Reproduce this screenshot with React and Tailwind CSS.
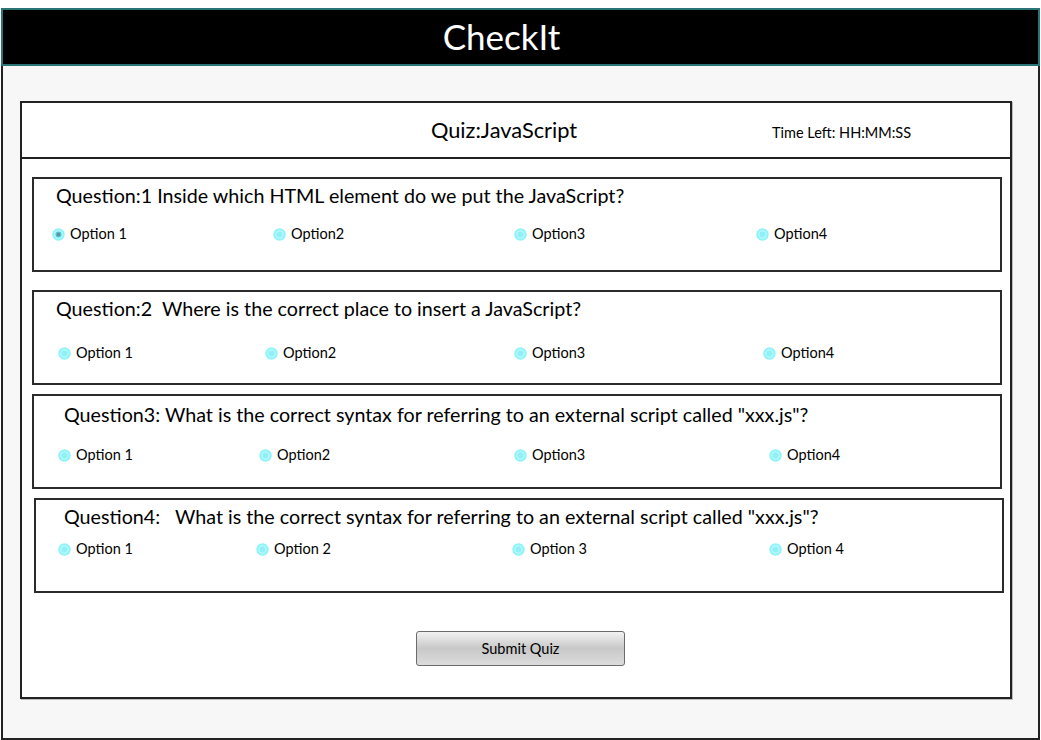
import React, { useState } from "react";

const questions = [
  {
    id: 1,
    text: "Question:1 Inside which HTML element do we put the JavaScript?",
    box: "mt-[18px] ml-[10px] w-[970px] h-[95px]",
    textPad: "pl-[22px] pt-[5px]",
    optRow: "mt-[17px] pl-[18px] grid-cols-[221px_241px_242px_1fr]",
    options: ["Option 1", "Option2", "Option3", "Option4"],
  },
  {
    id: 2,
    text: "Question:2  Where is the correct place to insert a JavaScript?",
    box: "mt-[18px] ml-[10px] w-[970px] h-[95px]",
    textPad: "pl-[22px] pt-[5px]",
    optRow: "mt-[23px] pl-[24px] grid-cols-[207px_249px_249px_1fr]",
    options: ["Option 1", "Option2", "Option3", "Option4"],
  },
  {
    id: 3,
    text: 'Question3: What is the correct syntax for referring to an external script called "xxx.js"?',
    box: "mt-[9px] ml-[10px] w-[970px] h-[95px]",
    textPad: "pl-[30px] pt-[7px]",
    optRow: "mt-[19px] pl-[24px] grid-cols-[201px_255px_255px_1fr]",
    options: ["Option 1", "Option2", "Option3", "Option4"],
  },
  {
    id: 4,
    text: 'Question4:   What is the correct syntax for referring to an external script called "xxx.js"?',
    box: "mt-[9px] ml-[12px] w-[970px] h-[95px]",
    textPad: "pl-[28px] pt-[5px]",
    optRow: "mt-[11px] pl-[22px] grid-cols-[198px_256px_257px_1fr]",
    options: ["Option 1", "Option 2", "Option 3", "Option 4"],
  },
];

function Radio({ checked }) {
  return (
    <svg width="13" height="13" viewBox="0 0 13 13" className="shrink-0">
      <circle cx="6.5" cy="6.5" r="6.2" fill="#8ff3f8" />
      <circle cx="6.5" cy="6.5" r="4.2" fill="#b8fafc" />
      <circle cx="6.5" cy="6.5" r="3" fill={checked ? "#4fc6d6" : "#8ff0f6"} />
      {checked && <circle cx="6.5" cy="6.5" r="1.8" fill="#6a8f96" />}
    </svg>
  );
}

function QuestionBox({ q, value, onChange }) {
  return (
    <div className={`${q.box} border-2 border-[#2b2b2b] bg-white`}>
      <div className={`${q.textPad} text-[19.7px] leading-[24px] text-black whitespace-pre`}>{q.text}</div>
      <div className={`${q.optRow} grid`}>
        {q.options.map((opt, i) => (
          <label key={opt} className="flex items-center gap-[5px] cursor-pointer" onClick={() => onChange(q.id, i)}>
            <Radio checked={value === i} />
            <span className="text-[14.5px] leading-[18px] text-black">{opt}</span>
          </label>
        ))}
      </div>
    </div>
  );
}

export default function App() {
  const [answers, setAnswers] = useState({ 1: 0 });

  const handleChange = (qid, idx) => {
    setAnswers({ ...answers, [qid]: idx });
  };

  return (
    <div className="w-[1041px] h-[740px] bg-white pt-[8px] font-['Lato','Open_Sans',sans-serif] overflow-hidden">
      <div className="ml-[1px] w-[1039px] h-[58px] bg-black border-2 border-[#2a7475] flex items-center justify-center pr-[38px]">
        <h1 className="text-white text-[35px] leading-none pb-[2px]">CheckIt</h1>
      </div>
      <div className="ml-[1px] w-[1039px] h-[674px] bg-[#f7f7f7] border-2 border-t-0 border-[#222] pt-[35px] pl-[17px]">
        <div className="w-[992px] h-[598px] bg-white border-2 border-[#222] shadow-[1px_1px_0_#bbb] flex flex-col">
          <div className="h-[56px] border-b-2 border-[#222] flex items-center relative">
            <div className="w-full text-center text-[21.8px] text-black pr-[24px]">Quiz:JavaScript</div>
            <div className="absolute left-[750px] top-[19px] text-[14.5px] text-black">Time Left: HH:MM:SS</div>
          </div>
          {questions.map((q) => (
            <QuestionBox key={q.id} q={q} value={answers[q.id]} onChange={handleChange} />
          ))}
          <div className="mt-[38px] flex pl-[394px]">
            <button className="w-[209px] h-[35px] rounded-[3px] border border-[#6b6b6b] bg-gradient-to-b from-[#f2f2f2] via-[#c8c8c8] to-[#dcdcdc] text-[14.5px] text-black">
              Submit Quiz
            </button>
          </div>
        </div>
      </div>
    </div>
  );
}
